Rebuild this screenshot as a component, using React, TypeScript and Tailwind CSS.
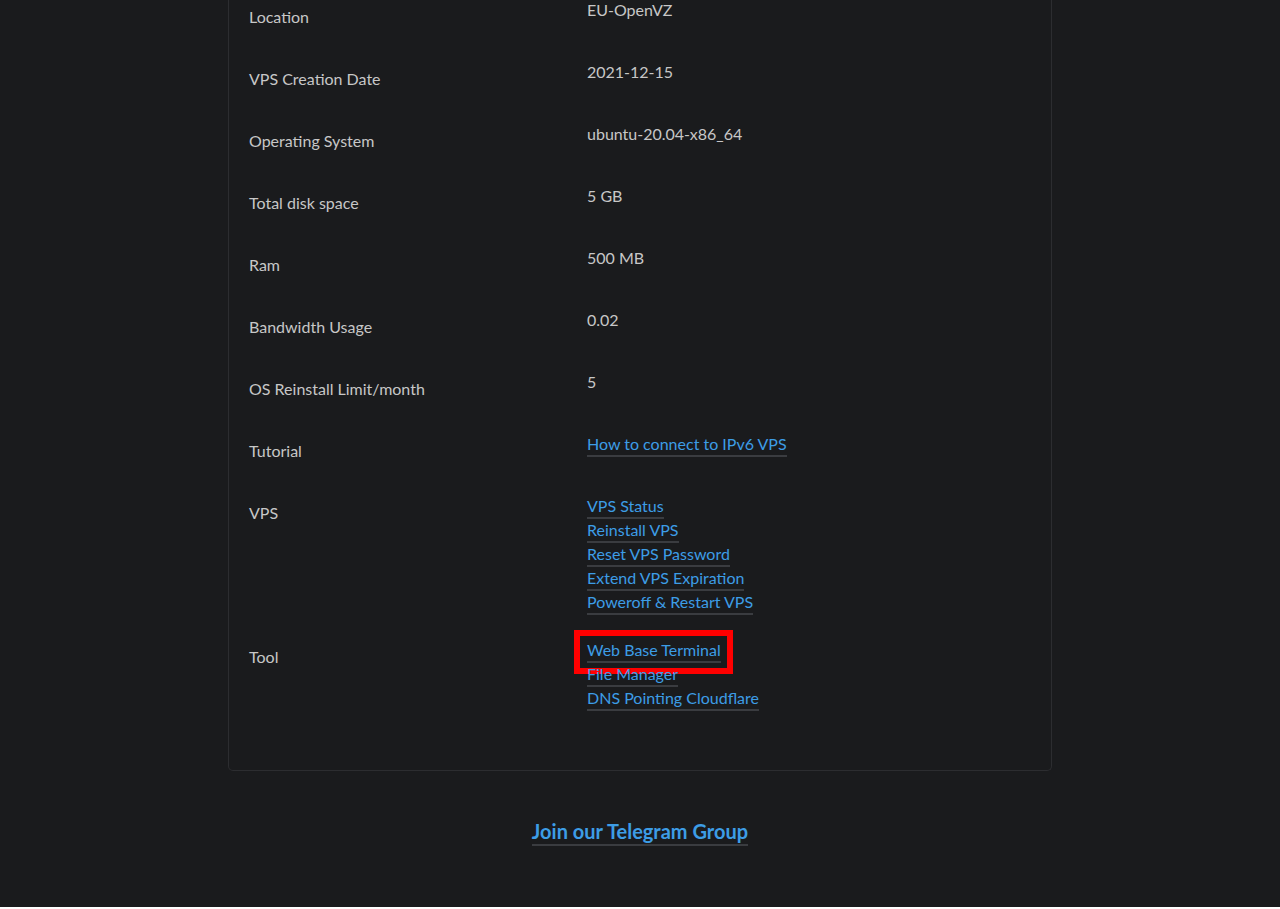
import React from "react";

const rows: { label: string; value?: string; links?: string[]; pb: string }[] = [
  { label: "Location", value: "EU-OpenVZ", pb: "pb-[31px]" },
  { label: "VPS Creation Date", value: "2021-12-15", pb: "pb-[31px]" },
  { label: "Operating System", value: "ubuntu-20.04-x86_64", pb: "pb-[31px]" },
  { label: "Total disk space", value: "5 GB", pb: "pb-[31px]" },
  { label: "Ram", value: "500 MB", pb: "pb-[31px]" },
  { label: "Bandwidth Usage", value: "0.02", pb: "pb-[31px]" },
  { label: "OS Reinstall Limit/month", value: "5", pb: "pb-[31px]" },
  { label: "Tutorial", links: ["How to connect to IPv6 VPS"], pb: "pb-[31px]" },
  {
    label: "VPS",
    links: [
      "VPS Status",
      "Reinstall VPS",
      "Reset VPS Password",
      "Extend VPS Expiration",
      "Poweroff & Restart VPS",
    ],
    pb: "pb-[23px]",
  },
  {
    label: "Tool",
    links: ["Web Base Terminal", "File Manager", "DNS Pointing Cloudflare"],
    pb: "pb-[59px]",
  },
];

function Link({ text, boxed }: { text: string; boxed?: boolean }) {
  return (
    <div className="relative">
      <a
        href="#"
        className="block w-fit leading-[22px] border-b-2 border-[#3a3c40] text-[#3d9de6] no-underline"
      >
        {text}
      </a>
      {boxed && (
        <div className="absolute left-[-13px] top-[-9px] w-[159px] h-[44px] border-[6px] border-[#ff0000] pointer-events-none" />
      )}
    </div>
  );
}

export default function App() {
  return (
    <div
      className="min-h-[909px] bg-[#1a1b1d] text-[#c7c7c7] text-[16px]"
      style={{ fontFamily: "Lato, 'Noto Sans', sans-serif" }}
    >
      <div className="w-[824px] mx-auto border-x border-b border-[#2c2d30] rounded-b-[5px] px-[20px]">
        <div className="-mt-[2px]">
          {rows.map((r) => (
            <div key={r.label} className={`grid grid-cols-[338px_1fr] ${r.pb}`}>
              <div className="pt-[7px] leading-6">{r.label}</div>
              <div className="leading-6">
                {r.value && <div>{r.value}</div>}
                {r.links && (
                  <div className="pt-[1px]">
                    {r.links.map((l) => (
                      <Link key={l} text={l} boxed={l === "Web Base Terminal"} />
                    ))}
                  </div>
                )}
              </div>
            </div>
          ))}
        </div>
      </div>
      <div className="pt-[47px] text-center">
        <a
          href="#"
          className="inline-block text-[20px] font-bold leading-[26px] border-b-2 border-[#3a3c40] text-[#3d9de6]"
        >
          Join our Telegram Group
        </a>
      </div>
    </div>
  );
}
